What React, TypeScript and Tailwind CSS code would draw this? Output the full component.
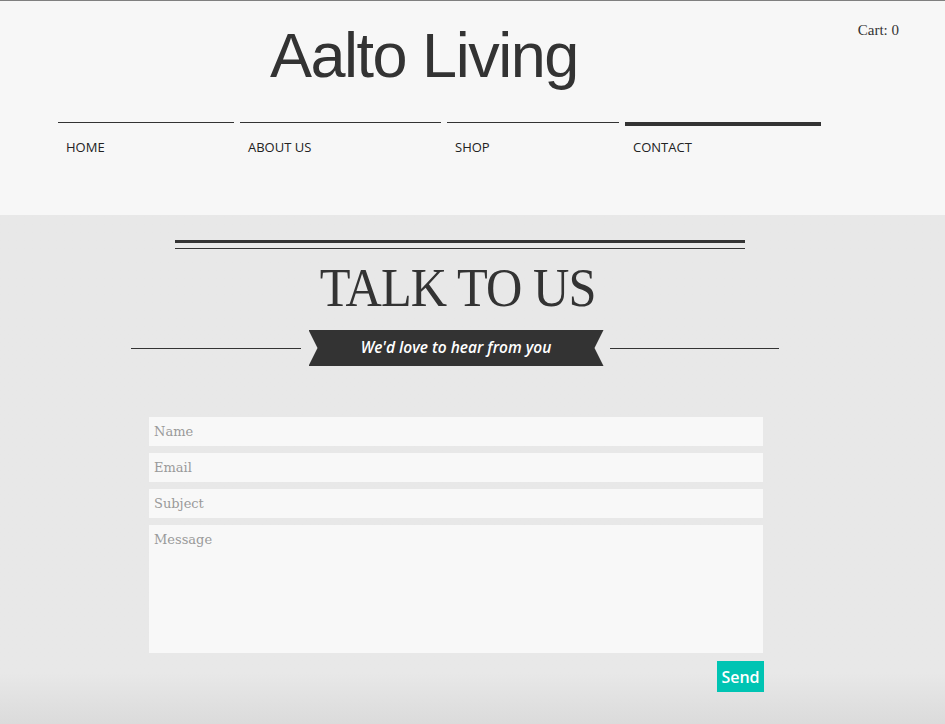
const navItems = [
  { label: "HOME", width: "w-[176px]", active: false },
  { label: "ABOUT US", width: "w-[201px]", active: false },
  { label: "SHOP", width: "w-[172px]", active: false },
  { label: "CONTACT", width: "w-[196px]", active: true },
];

const fields = ["Name", "Email", "Subject"];

const App = () => {
  return (
    <div className="min-h-screen w-full bg-[#e8e8e8] font-['Open_Sans',sans-serif] text-[#333]">
      {/* --- Header --- */}
      <header className="h-[215px] border-t border-[#808080] bg-[#f7f7f7]">
        <div className="flex items-start justify-between">
          <h1 className="mt-[23px] ml-[270px] font-['Liberation_Sans',Arial,sans-serif] text-[63px] leading-[63px] tracking-[-1.5px] text-[#333]">
            Aalto Living
          </h1>
          <div className="mt-[22px] mr-[46px] font-['Liberation_Serif',Georgia,serif] text-[15px] leading-[15px] text-[#333]">
            Cart: 0
          </div>
        </div>

        <nav className="mt-[35px] ml-[58px] flex gap-[6px]">
          {navItems.map((item) => (
            <a
              key={item.label}
              href="#"
              className={`${item.width} ${
                item.active
                  ? "border-t-4 pt-[13px]"
                  : "border-t pt-[16px]"
              } border-[#333] pl-2 text-[13px] leading-4 text-[#222]`}
            >
              {item.label}
            </a>
          ))}
        </nav>
      </header>

      {/* --- Contact Section --- */}
      <section className="bg-linear-to-b from-[#e8e8e8] from-[90%] to-[#dbdbdb] pb-8">
        <div className="ml-[131px] w-[648px] pt-[25px]">
          <div className="ml-[44px] mr-[34px] h-[3px] bg-[#333]" />
          <div className="ml-[44px] mr-[34px] mt-[5px] h-px bg-[#333]" />

          <h2 className="mt-[11px] flex justify-center font-['Liberation_Serif',Georgia,serif] text-[55px] leading-[55px] tracking-[-1px] text-[#333]">
            <span className="inline-block translate-x-[3px] scale-x-[0.915]">TALK TO US</span>
          </h2>

          <div className="mt-[15px] flex items-center">
            <div className="h-px flex-1 bg-[#333]" />
            <div className="ml-2 mr-[6px] flex h-9 w-[295px] items-center justify-center bg-[#333] [clip-path:polygon(0_0,100%_0,calc(100%_-_9px)_50%,100%_100%,0_100%,9px_50%)]">
              <span className="text-[15.5px] font-semibold italic text-white">
                We'd love to hear from you
              </span>
            </div>
            <div className="h-px flex-1 bg-[#333]" />
          </div>

          <form className="ml-[18px] mr-[16px] mt-[51px] flex flex-col gap-[7px]">
            {fields.map((field) => (
              <input
                key={field}
                type="text"
                placeholder={field}
                className="h-[29px] bg-[#f8f8f8] px-[5px] font-['DejaVu_Serif',Georgia,serif] text-[13px] text-[#333] outline-none placeholder:text-[#9a9a9a]"
              />
            ))}
            <textarea
              placeholder="Message"
              className="h-[128px] resize-none bg-[#f8f8f8] px-[5px] pt-[5px] font-['DejaVu_Serif',Georgia,serif] text-[13px] text-[#333] outline-none placeholder:text-[#9a9a9a]"
            />
            <div className="mt-px flex justify-end">
              <button
                type="button"
                className="-mr-px h-[31px] w-[47px] bg-[#00c4b3] text-[16px] font-semibold text-white"
              >
                Send
              </button>
            </div>
          </form>
        </div>
      </section>
    </div>
  );
};

export default App;
